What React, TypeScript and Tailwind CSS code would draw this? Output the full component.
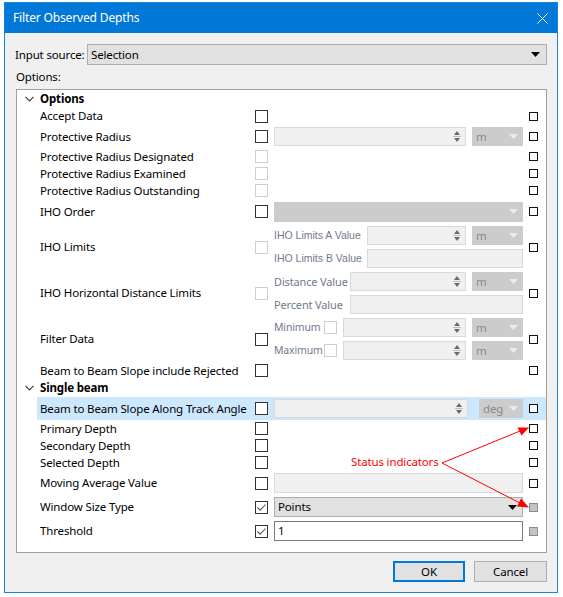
import React from "react";

type CheckState = "off" | "disabled" | "checked";

function Check({ state }: { state: CheckState }) {
  if (state === "checked") {
    return (
      <div className="flex h-[13px] w-[13px] shrink-0 items-center justify-center border border-[#333333] bg-white">
        <svg width="11" height="11" viewBox="0 0 11 11">
          <path d="M1.5 5.5 L4.2 8.2 L9.5 2.5" fill="none" stroke="#555" strokeWidth="1.1" />
        </svg>
      </div>
    );
  }
  return (
    <div
      className={
        state === "off"
          ? "h-[13px] w-[13px] shrink-0 border border-[#333333] bg-white"
          : "h-[13px] w-[13px] shrink-0 border border-[#cfcfcf] bg-white"
      }
    />
  );
}

function Status({ gray }: { gray?: boolean }) {
  return (
    <div
      className={
        gray
          ? "h-[9px] w-[9px] shrink-0 border border-[#8c8c8c] bg-[#c4c4c4]"
          : "h-[9px] w-[9px] shrink-0 border border-[#111111] bg-white"
      }
    />
  );
}

function Arrow({ color }: { color: string }) {
  return (
    <svg width="9" height="5" viewBox="0 0 9 5">
      <path d="M0 0 H9 L4.5 5 Z" fill={color} />
    </svg>
  );
}

function Spin({ w }: { w: string }) {
  return (
    <div className={`flex h-[19px] ${w} border border-[#d9d9d9] bg-[#f0f0f0]`}>
      <div className="flex-1" />
      <div className="flex w-[14px] flex-col items-center justify-center gap-[1px] pr-[2px]">
        <svg width="6" height="4" viewBox="0 0 6 4">
          <path d="M0 4 H6 L3 0 Z" fill="#6a6a6a" />
        </svg>
        <div className="h-px w-[8px] bg-[#bdbdbd]" />
        <svg width="6" height="4" viewBox="0 0 6 4">
          <path d="M0 0 H6 L3 4 Z" fill="#6a6a6a" />
        </svg>
      </div>
    </div>
  );
}

function Unit({ text, w = "w-[51px]" }: { text: string; w?: string }) {
  return (
    <div className={`flex h-[19px] ${w} items-center justify-between bg-[#cccccc] pl-[4px] pr-[5px] text-[#8a8a8a]`}>
      <span>{text}</span>
      <Arrow color="#ececec" />
    </div>
  );
}

function Field({ w, white }: { w: string; white?: boolean }) {
  return (
    <div
      className={
        white
          ? `h-[19px] ${w} border border-[#7a7a7a] bg-white`
          : `h-[19px] ${w} border border-[#d9d9d9] bg-[#f0f0f0]`
      }
    />
  );
}

// disabled sub-labels
const sub = "text-[#6f7a8a] whitespace-nowrap text-[11px]";

function Row({
  label,
  h,
  check,
  editor,
  gray,
  active,
}: {
  label: string;
  h: string;
  check: CheckState;
  editor?: React.ReactNode;
  gray?: boolean;
  active?: boolean;
}) {
  return (
    <div className={`flex ${h} items-center pl-[20px]`}>
      <div className={`flex h-full flex-1 items-center ${active ? "bg-[#cce8ff]" : ""}`}>
        <div className="w-[218px] shrink-0 whitespace-nowrap pl-[3px] text-[#000]">{label}</div>
        <Check state={check} />
        <div className="ml-[6px] w-[249px] shrink-0">{editor}</div>
        <div className="ml-[6px]">
          <Status gray={gray} />
        </div>
      </div>
    </div>
  );
}

function Header({ label, h }: { label: string; h: string }) {
  return (
    <div className={`flex ${h} items-center`}>
      <div className="flex w-[23px] justify-end pr-[6px]">
        <svg width="9" height="6" viewBox="0 0 9 6">
          <path d="M0.5 0.8 L4.5 4.8 L8.5 0.8" fill="none" stroke="#404040" strokeWidth="1.2" />
        </svg>
      </div>
      <span className="font-bold">{label}</span>
    </div>
  );
}

export default function App() {
  return (
    <div
      className="relative h-[597px] w-[563px] bg-white pl-[4px] pt-[2px] text-[11.5px] leading-none tracking-[-0.15px] text-black"
      style={{ fontFamily: '"Noto Sans", "Open Sans", sans-serif' }}
    >
      <div className="flex h-[591px] w-[554px] flex-col border border-[#1883d7] bg-[#f0f0f0]">
        <div className="flex h-[30px] shrink-0 items-center justify-between bg-[#0078d7] pl-[8px] pr-[9px] text-white">
          <span className="text-[12px]">Filter Observed Depths</span>
          <svg width="11" height="11" viewBox="0 0 11 11">
            <path d="M0.5 0.5 L10.5 10.5 M10.5 0.5 L0.5 10.5" stroke="#fff" strokeWidth="1" />
          </svg>
        </div>

        <div className="flex flex-1 flex-col pl-[11px] pr-[10px] pt-[11px]">
          <div className="flex h-[21px] items-center">
            <span className="-ml-[1px] w-[72px] shrink-0 whitespace-nowrap">Input source:</span>
            <div className="flex h-[21px] flex-1 items-center justify-between border border-[#adadad] bg-[#e1e1e1] pl-[3px] pr-[6px]">
              <span>Selection</span>
              <Arrow color="#000" />
            </div>
          </div>
          <div className="flex h-[24px] items-center">Options:</div>

          <div className="h-[464px] border border-[#a0a0a0] bg-white">
            <Header label="Options" h="h-[17px]" />
            <Row label="Accept Data" h="h-[18px]" check="off" />
            <Row
              label="Protective Radius"
              h="h-[23px]"
              check="off"
              editor={
                <div className="flex gap-[6px]">
                  <Spin w="w-[192px]" />
                  <Unit text="m" />
                </div>
              }
            />
            <Row label="Protective Radius Designated" h="h-[17px]" check="disabled" />
            <Row label="Protective Radius Examined" h="h-[17px]" check="disabled" />
            <Row label="Protective Radius Outstanding" h="h-[17px]" check="disabled" />
            <Row
              label="IHO Order"
              h="h-[25px]"
              check="off"
              editor={
                <div className="flex h-[20px] items-center justify-end bg-[#cccccc] pr-[5px]">
                  <Arrow color="#ececec" />
                </div>
              }
            />
            <Row
              label="IHO Limits"
              h="h-[46px]"
              check="disabled"
              editor={
                <div className="flex flex-col gap-[3px]">
                  <div className="flex h-[20px] items-center">
                    <span
                      className={`w-[93px] shrink-0 tracking-normal ${sub}`}
                      style={{ fontFamily: '"Liberation Sans", sans-serif', fontSize: "10.5px" }}
                    >
                      IHO Limits A Value
                    </span>
                    <Spin w="w-[99px]" />
                    <div className="ml-[6px]">
                      <Unit text="m" />
                    </div>
                  </div>
                  <div className="flex h-[20px] items-center">
                    <span
                      className={`w-[93px] shrink-0 tracking-normal ${sub}`}
                      style={{ fontFamily: '"Liberation Sans", sans-serif', fontSize: "10.5px" }}
                    >
                      IHO Limits B Value
                    </span>
                    <Field w="flex-1" />
                  </div>
                </div>
              }
            />
            <Row
              label="IHO Horizontal Distance Limits"
              h="h-[46px]"
              check="disabled"
              editor={
                <div className="flex flex-col gap-[3px]">
                  <div className="flex h-[20px] items-center">
                    <span className={`w-[76px] shrink-0 ${sub}`}>Distance Value</span>
                    <Spin w="w-[116px]" />
                    <div className="ml-[6px]">
                      <Unit text="m" />
                    </div>
                  </div>
                  <div className="flex h-[20px] items-center">
                    <span className={`w-[76px] shrink-0 ${sub}`}>Percent Value</span>
                    <Field w="flex-1" />
                  </div>
                </div>
              }
            />
            <Row
              label="Filter Data"
              h="h-[46px]"
              check="off"
              editor={
                <div className="flex flex-col gap-[3px]">
                  {["Minimum", "Maximum"].map((l) => (
                    <div key={l} className="flex h-[20px] items-center">
                      <span className={`w-[50px] shrink-0 ${sub}`} style={{ fontSize: "10.5px" }}>
                        {l}
                      </span>
                      <Check state="disabled" />
                      <div className="ml-[6px]">
                        <Spin w="w-[123px]" />
                      </div>
                      <div className="ml-[6px]">
                        <Unit text="m" />
                      </div>
                    </div>
                  ))}
                </div>
              }
            />
            <Row label="Beam to Beam Slope include Rejected" h="h-[17px]" check="off" />
            <Header label="Single beam" h="h-[18px]" />
            <Row
              label="Beam to Beam Slope Along Track Angle"
              h="h-[23px]"
              check="off"
              active
              editor={
                <div className="flex items-center">
                  <Spin w="w-[194px]" />
                  <div className="ml-[11px]">
                    <Unit text="deg" w="w-[44px]" />
                  </div>
                </div>
              }
            />
            <Row label="Primary Depth" h="h-[17px]" check="off" />
            <Row label="Secondary Depth" h="h-[17px]" check="off" />
            <Row label="Selected Depth" h="h-[17px]" check="off" />
            <Row label="Moving Average Value" h="h-[24px]" check="off" editor={<Field w="w-full h-[20px]" />} />
            <Row
              label="Window Size Type"
              h="h-[24px]"
              check="checked"
              gray
              editor={
                <div className="flex h-[20px] items-center justify-between border border-[#adadad] bg-[#e1e1e1] pl-[3px] pr-[5px]">
                  <span>Points</span>
                  <Arrow color="#000" />
                </div>
              }
            />
            <Row
              label="Threshold"
              h="h-[24px]"
              check="checked"
              gray
              editor={
                <div className="flex h-[20px] items-center border border-[#7a7a7a] bg-white pl-[3px]">1</div>
              }
            />
          </div>

          <div className="mt-[8px] flex justify-end gap-[9px]">
            <button className="h-[21px] w-[72px] border-2 border-[#0078d7] bg-[#e1e1e1]">OK</button>
            <button className="h-[21px] w-[73px] border border-[#adadad] bg-[#e1e1e1]">Cancel</button>
          </div>
        </div>
      </div>

      <span className="absolute left-[351px] top-[456px] text-[11.5px] text-[#ff0000]">Status indicators</span>
      <svg className="pointer-events-none absolute left-0 top-0" width="563" height="597" viewBox="0 0 563 597">
        <g stroke="#ff0000" strokeWidth="1" fill="none">
          <path d="M442 463 L520 431" />
          <path d="M442 463 L520 503" />
        </g>
        <path d="M529 427.5 L517.5 427.5 L521.5 435.5 Z" fill="#ff0000" />
        <path d="M529 507.5 L521 498.5 L517 506.5 Z" fill="#ff0000" />
      </svg>
    </div>
  );
}
